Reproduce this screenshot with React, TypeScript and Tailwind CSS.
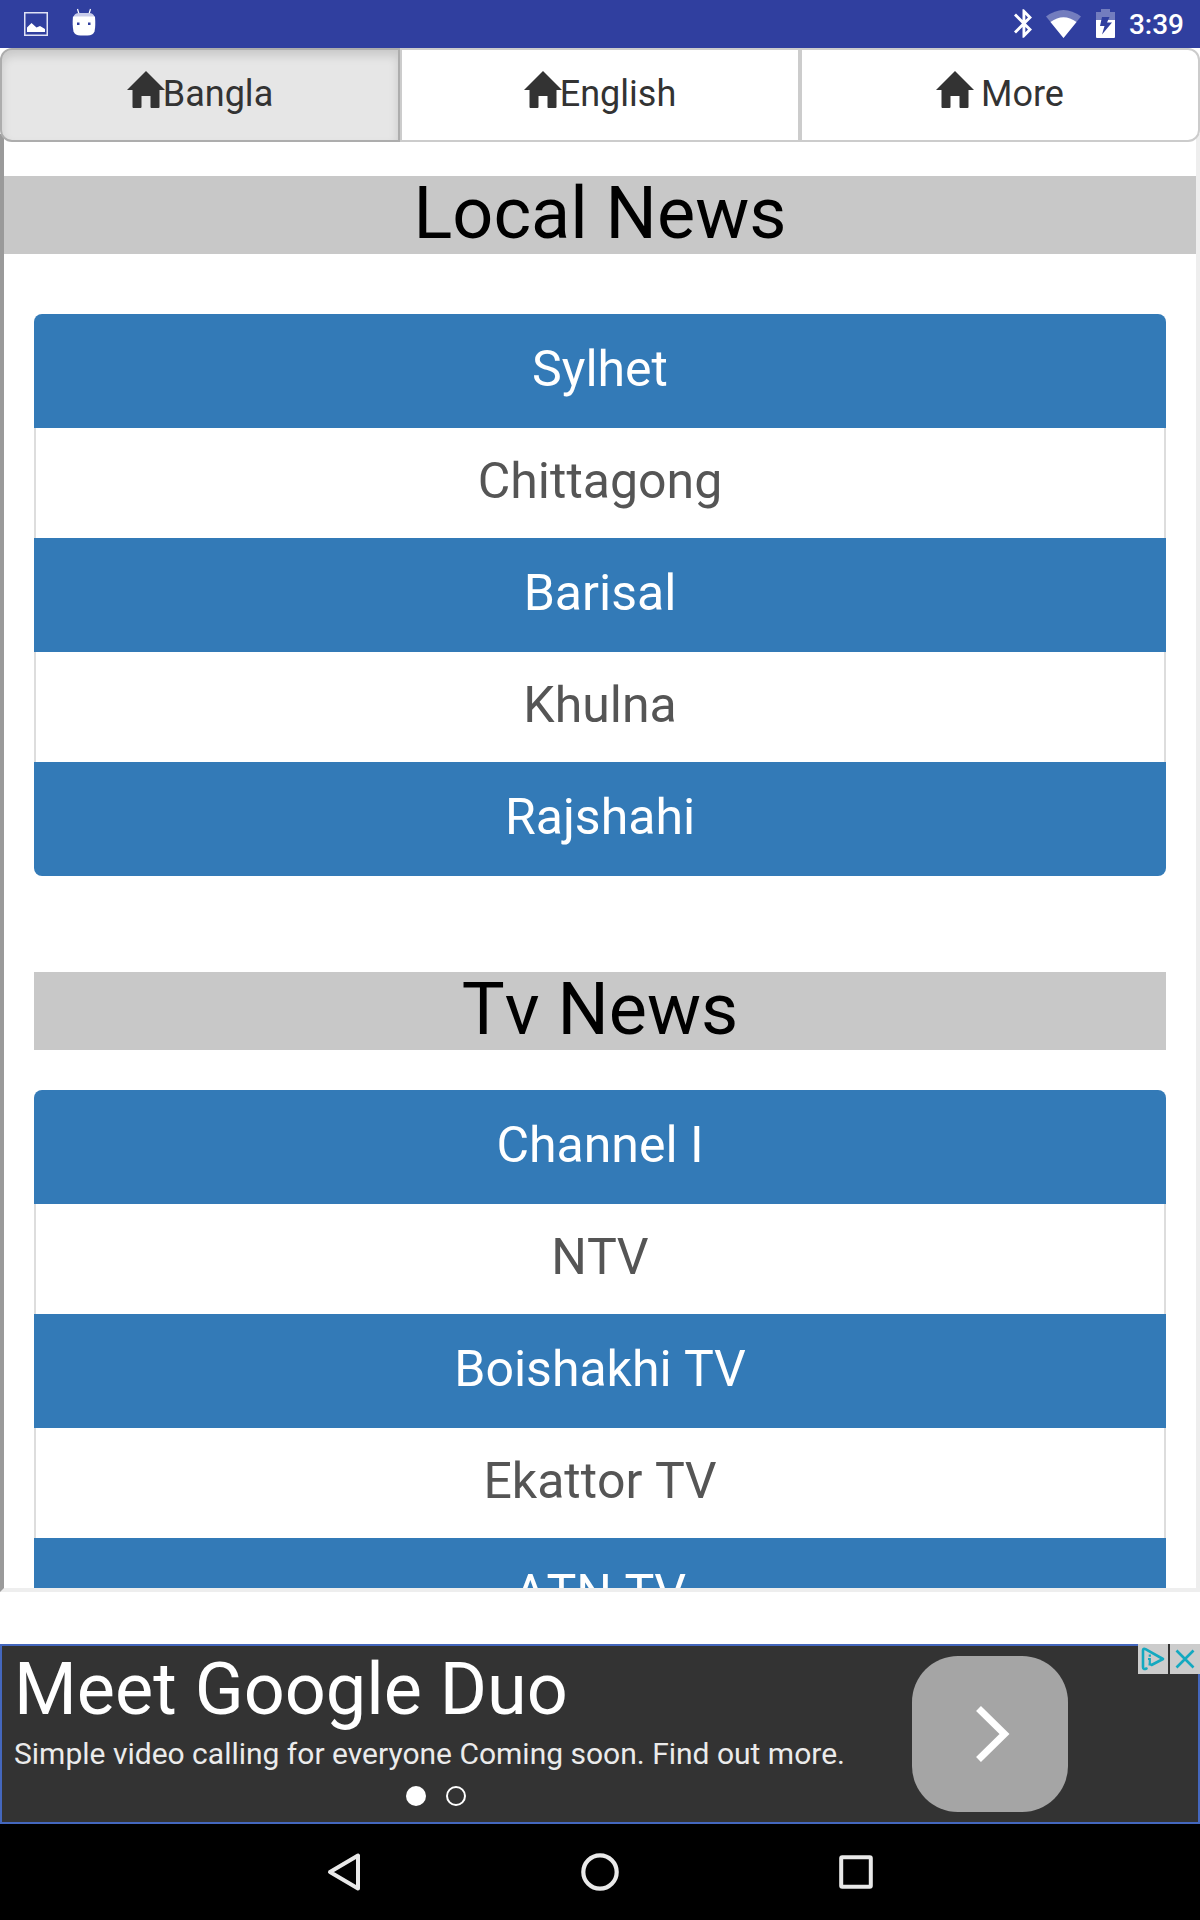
import { useState } from "react";
import clsx from "clsx";

const tabs = [
  { id: "bangla", label: "Bangla" },
  { id: "english", label: "English" },
  { id: "more", label: " More" },
];

const localNews = ["Sylhet", "Chittagong", "Barisal", "Khulna", "Rajshahi"];
const tvNews = ["Channel I", "NTV", "Boishakhi TV", "Ekattor TV", "ATN TV"];

function HomeIcon() {
  return (
    <svg width="38" height="38" viewBox="0 0 38 38" className="-mr-[2px] -mt-[8px] shrink-0" fill="#333333">
      <path d="M19 0 38 19h-5.500v17q0 1-1 1H24.500q-1 0-1-1V25h-9v11q0 1-1 1H6.500q-1 0-1-1V19H0z" />
    </svg>
  );
}

function StatusBar() {
  return (
    <div className="flex h-12 items-start bg-[#303f9f]">
      <svg width="24" height="24" viewBox="0 0 24 24" className="ml-6 mt-3">
        <rect x="0.75" y="0.75" width="22.500" height="22.500" fill="none" stroke="#dfe2f5" strokeWidth="1.500" />
        <path d="M3 20v-4.500l4.500-4.500 5 4.500 3.500-1.500 5 3v3z" fill="#fff" />
      </svg>
      <svg width="24" height="28" viewBox="0 0 24 28" className="ml-6 mt-2">
        <path d="M5.500 1 7 6M18.500 1 17 6" stroke="#fff" strokeWidth="1.200" />
        <path d="M1.500 9Q2.500 5 7 5h10q4.500 0 5.500 4z" fill="#c8ccea" />
        <path d="M1 8.500h22q.8 9-.5 15-1.500 4-7 4h-7q-5.500 0-7-4-1.300-6-.5-15z" fill="#fff" />
        <rect x="5" y="14.500" width="2.500" height="2.500" fill="#303f9f" />
        <rect x="16" y="14.500" width="2.500" height="2.500" fill="#303f9f" />
      </svg>
      <div className="ml-auto flex items-start pr-[16px]">
        <svg width="18" height="29" viewBox="5 2 12.71 20" className="mt-[9px]" fill="#fff">
          <path d="M17.71 7.710 12 2h-1v7.590L6.410 5 5 6.410 10.590 12 5 17.590 6.410 19 11 14.410V22h1l5.710-5.710L13.410 12l4.300-4.290zM13 5.830l1.880 1.880L13 9.590V5.830zm1.880 10.460L13 18.170v-3.760l1.880 1.880z" />
        </svg>
        <svg width="35" height="28" viewBox="0 0 35 28" className="ml-[14px] mt-[10px]">
          <path d="M0 6.500Q17.500-6.500 35 6.500L17.500 28z" fill="#737dbe" />
          <path d="M4.500 12Q17.500 2.500 30.500 12L17.500 28z" fill="#fff" />
        </svg>
        <svg width="19" height="29" viewBox="0 0 19 29" className="ml-[15px] mt-[9px]">
          <path d="M0 3h5V0h9v3h5v8H0z" fill="#737dbe" />
          <path d="M0 11h19v17q0 1-1 1H1q-1 0-1-1z" fill="#fff" />
          <path d="M6 8H13.500l-2.500 5.500h5L6 25.500l2.500-8.500H4z" fill="#303f9f" />
        </svg>
        <span className="ml-[14px] mt-[8px] text-[28px] font-medium leading-[34px] text-white">3:39</span>
      </div>
    </div>
  );
}

function NewsList({ items }: { items: string[] }) {
  return (
    <ul className="overflow-hidden rounded-[8px]">
      {items.map((item, i) => (
        <li
          key={item}
          className={clsx(
            "text-center text-[50px] leading-[66px]",
            i % 2 === 0
              ? "h-[114px] bg-[#337ab7] pt-[22px] text-white"
              : "h-[110px] border-x-2 border-[#dddddd] bg-white pt-[20px] text-[#555555]"
          )}
        >
          {item}
        </li>
      ))}
    </ul>
  );
}

function AdBanner() {
  return (
    <div className="relative mt-[52px] flex h-[180px] border-2 border-[#4467bd] bg-[#333333]">
      <div className="w-[910px] pl-3">
        <div className="h-[86px] whitespace-nowrap pt-[2px] text-[72px] leading-[84px] text-white">Meet Google Duo</div>
        <div className="h-[54px] whitespace-nowrap pt-[5px] text-[30px] leading-[34px] text-[#ebebeb]">
          Simple video calling for everyone Coming soon. Find out more.
        </div>
        <div className="flex gap-5 pl-[392px]">
          <span className="size-5 rounded-full bg-white" />
          <span className="size-5 rounded-full border-2 border-white" />
        </div>
      </div>
      <button className="mt-[10px] flex size-[156px] items-center justify-center rounded-[46px] bg-[#a5a5a5]">
        <svg width="34" height="56" viewBox="0 0 34 56" className="ml-[5px]">
          <path d="M2.500 2.500 28.500 28 2.500 53.500" fill="none" stroke="#fff" strokeWidth="7" />
        </svg>
      </button>
      <div className="absolute -right-[2px] -top-[2px] flex gap-[2px] bg-[#333333]">
        <svg width="30" height="30" viewBox="0 0 30 30" className="bg-[#cccccc]">
          <path
            d="M8.500 24.500Q5 26 5 23V6.500Q5 4 7.500 5.200L25 15 13.500 21"
            fill="none"
            stroke="#14a9c0"
            strokeWidth="2.600"
            strokeLinecap="round"
            strokeLinejoin="round"
          />
          <path d="M11.800 10.500v2.300M10 15h1.800v6M10.500 20.500h3" fill="none" stroke="#14a9c0" strokeWidth="2.200" />
        </svg>
        <svg width="30" height="30" viewBox="0 0 30 30" className="bg-[#cccccc]">
          <path d="M6.500 6.500l17 17M23.500 6.500l-17 17" stroke="#14a9c0" strokeWidth="2.600" />
        </svg>
      </div>
    </div>
  );
}

function NavBar() {
  return (
    <div className="flex h-24 items-center bg-black pl-[326px]">
      <svg width="36" height="40" viewBox="0 0 36 40" fill="none" stroke="#e9e9e9" strokeWidth="4" strokeLinejoin="round">
        <path d="M32 3.500v33L4 20z" />
      </svg>
      <svg width="40" height="40" viewBox="0 0 40 40" className="ml-[218px]" fill="none" stroke="#e9e9e9" strokeWidth="4.200">
        <circle cx="20" cy="20" r="16.700" />
      </svg>
      <svg width="34" height="34" viewBox="0 0 34 34" className="ml-[219px]" fill="none" stroke="#e9e9e9" strokeWidth="4">
        <rect x="2.200" y="2.200" width="29.600" height="29.600" rx="1" />
      </svg>
    </div>
  );
}

export default function App() {
  const [active, setActive] = useState("bangla");

  return (
    <div className="h-[1920px] w-[1200px] overflow-hidden bg-white font-[Roboto,sans-serif]">
      <StatusBar />
      <nav className="relative grid h-[94px] grid-cols-3">
        {tabs.map(tab => (
          <button
            key={tab.id}
            onClick={() => setActive(tab.id)}
            className={clsx(
              "flex items-center justify-center whitespace-pre border-2 pb-0.5 text-[36px] text-[#333333] first:rounded-l-[12px] last:rounded-r-[12px]",
              active === tab.id
                ? "border-[#adadad] bg-[#e6e6e6] shadow-[inset_0_6px_10px_rgba(0,0,0,0.125)]"
                : "border-[#cccccc] bg-white"
            )}
          >
            <HomeIcon />
            {tab.label}
          </button>
        ))}
      </nav>
      <main className="-mt-[8px] h-[1458px] overflow-hidden border-b-4 border-l-4 border-r-4 border-b-[#eeeeee] border-l-[#9a9a9a] border-r-[#eeeeee] pt-[42px] [font-kerning:none]">
        <h1 className="h-[78px] bg-[#c8c8c8] text-center text-[72px] leading-[76px] text-black">Local News</h1>
        <div className="px-[30px] pt-[60px]">
          <NewsList items={localNews} />
          <h1 className="mb-10 mt-24 h-[78px] bg-[#c8c8c8] text-center text-[72px] leading-[76px] text-black">Tv News</h1>
          <NewsList items={tvNews} />
        </div>
      </main>
      <AdBanner />
      <NavBar />
    </div>
  );
}
